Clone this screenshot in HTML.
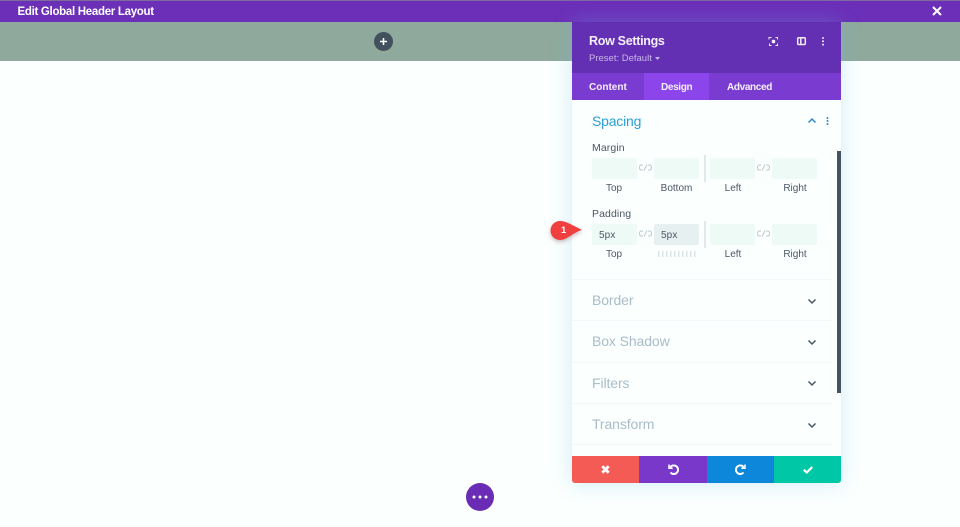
<!DOCTYPE html>
<html><head><meta charset="utf-8"><style>
html,body{margin:0;padding:0}
body{width:960px;height:527px;position:relative;overflow:hidden;background:#fbfffe;font-family:"Liberation Sans",sans-serif}
.a{position:absolute}
.t{position:absolute;white-space:nowrap;line-height:1}
.inp{position:absolute;height:21px;background:#eefaf5;border-radius:2px;width:45px}
.lb{position:absolute;font-size:10px;color:#4c5866;width:60px;text-align:center;line-height:1}
.sec{position:absolute;left:592px;font-size:14px;color:#a9bcc8;line-height:1;letter-spacing:-.1px}
.ln{position:absolute;left:572px;width:260px;height:1px;background:#f2f8f8}
svg{position:absolute;overflow:visible}
</style></head><body>
<div class="a" style="left:0;top:0;width:960px;height:22px;background:#6b2fb8"></div>
<div class="a" style="left:0;top:0;width:960px;height:1px;background:#7d6a9c"></div>
<div class="t" style="left:17.5px;top:6.5px;font-size:11.5px;font-weight:bold;color:#fff;letter-spacing:-.3px">Edit Global Header Layout</div>
<svg style="left:932px;top:6px" width="10" height="10"><path d="M1 1L9 9M9 1L1 9" stroke="#fff" stroke-width="2"/></svg>
<div class="a" style="left:0;top:22px;width:960px;height:39px;background:#8fa99d"></div>
<div class="a" style="left:374px;top:32px;width:19px;height:19px;border-radius:50%;background:#43505e"></div>
<svg style="left:380px;top:38px" width="7" height="7"><path d="M3.5 0V7M0 3.5H7" stroke="#fff" stroke-width="1.5"/></svg>

<div class="a" style="left:572px;top:22px;width:269px;height:461px;background:#fbfffe;box-shadow:0 0 20px rgba(110,190,235,.3);border-radius:3px"></div>
<div class="a" style="left:572px;top:22px;width:269px;height:51px;background:#6330b3"></div>
<div class="t" style="left:589px;top:35px;font-size:12.5px;font-weight:bold;color:#f4effb;letter-spacing:-.3px">Row Settings</div>
<div class="t" style="left:589px;top:53.5px;font-size:9.5px;color:#c9b6e8">Preset: Default</div>
<svg style="left:655px;top:57px" width="5" height="3"><path d="M0 0H5L2.5 3Z" fill="#c9b6e8"/></svg>
<svg style="left:769px;top:36.500px" width="9" height="9" fill="none" stroke="#f0eaf9" stroke-width="1"><path d="M0 2.5V.5H2.5M6.5 .5H8.500V2.500M8.500 6.500V8.500H6.500M2.500 8.500H.5V6.500"/><rect x="2.800" y="2.800" width="3.400" height="3.400" rx="1" fill="#f0eaf9" stroke="none"/></svg>
<svg style="left:796.500px;top:37px" width="9" height="8" fill="none" stroke="#f0eaf9" stroke-width="1.500"><rect x=".7" y=".7" width="7.600" height="6.800" rx="1"/><path d="M3.800 0V8"/></svg>
<svg style="left:821px;top:37px" width="4" height="9" fill="#f0eaf9"><circle cx="2" cy="1" r="1"/><circle cx="2" cy="4.300" r="1"/><circle cx="2" cy="7.600" r="1"/></svg>

<div class="a" style="left:572px;top:73px;width:269px;height:27px;background:#7a3bd0"></div>
<div class="a" style="left:644px;top:73px;width:65px;height:27px;background:#8b45ea"></div>
<div class="t" style="left:589px;top:83px;font-size:10px;font-weight:bold;color:#f5f0fc">Content</div>
<div class="t" style="left:661px;top:83px;font-size:10px;font-weight:bold;color:#f5f0fc;letter-spacing:-.35px">Design</div>
<div class="t" style="left:727px;top:83px;font-size:10px;font-weight:bold;color:#f5f0fc;letter-spacing:-.35px">Advanced</div>

<div class="t" style="left:592px;top:114px;font-size:14px;color:#2c9fd6;letter-spacing:-.2px">Spacing</div>
<svg style="left:807.500px;top:118px" width="8" height="5" fill="none" stroke="#2b87da" stroke-width="1.500"><path d="M.5 4.500L4 1L7.500 4.500"/></svg>
<svg style="left:825.500px;top:116.500px" width="3" height="8" fill="#2b87da"><circle cx="1.500" cy="1" r="1"/><circle cx="1.500" cy="4" r="1"/><circle cx="1.500" cy="7" r="1"/></svg>

<div class="t" style="left:592px;top:143px;font-size:10.500px;color:#4c5866;letter-spacing:.1px">Margin</div>
<div class="inp" style="left:592px;top:158px"></div>
<div class="inp" style="left:654px;top:158px"></div>
<div class="inp" style="left:710px;top:158px"></div>
<div class="inp" style="left:772px;top:158px"></div>
<div class="a" style="left:704px;top:155px;width:2px;height:27px;background:#dfe8ea"></div>
<svg style="left:639px;top:164px" width="13" height="7" fill="none" stroke="#bcc8cf" stroke-width="1"><path d="M4 1H2.500Q.5 1 .5 3.500T2.500 6H4M9 1H10.500Q12.500 1 12.500 3.500T10.500 6H9M5 6.500L8 .5"/></svg>
<svg style="left:757px;top:164px" width="13" height="7" fill="none" stroke="#bcc8cf" stroke-width="1"><path d="M4 1H2.500Q.5 1 .5 3.500T2.500 6H4M9 1H10.500Q12.500 1 12.500 3.500T10.500 6H9M5 6.500L8 .5"/></svg>
<div class="lb" style="left:584px;top:184px">Top</div>
<div class="lb" style="left:646.500px;top:184px">Bottom</div>
<div class="lb" style="left:703px;top:184px">Left</div>
<div class="lb" style="left:765px;top:184px">Right</div>

<div class="t" style="left:592px;top:209px;font-size:10.500px;color:#4c5866;letter-spacing:.1px">Padding</div>
<div class="inp" style="left:592px;top:224px"></div>
<div class="inp" style="left:654px;top:224px;background:#e6f0f1"></div>
<div class="inp" style="left:710px;top:224px"></div>
<div class="inp" style="left:772px;top:224px"></div>
<div class="a" style="left:704px;top:221px;width:2px;height:27px;background:#dfe8ea"></div>
<svg style="left:639px;top:230px" width="13" height="7" fill="none" stroke="#bcc8cf" stroke-width="1"><path d="M4 1H2.500Q.5 1 .5 3.500T2.500 6H4M9 1H10.500Q12.500 1 12.500 3.500T10.500 6H9M5 6.500L8 .5"/></svg>
<svg style="left:757px;top:230px" width="13" height="7" fill="none" stroke="#bcc8cf" stroke-width="1"><path d="M4 1H2.500Q.5 1 .5 3.500T2.500 6H4M9 1H10.500Q12.500 1 12.500 3.500T10.500 6H9M5 6.500L8 .5"/></svg>
<div class="t" style="left:599px;top:231px;font-size:10px;color:#4c5866;letter-spacing:.1px">5px</div>
<div class="t" style="left:661px;top:231px;font-size:10px;color:#4c5866;letter-spacing:.1px">5px</div>
<div class="lb" style="left:584px;top:250px">Top</div>
<div class="lb" style="left:703px;top:250px">Left</div>
<div class="lb" style="left:765px;top:250px">Right</div>
<div class="a" style="left:658px;top:251px;width:38px;height:6px;background:repeating-linear-gradient(90deg,#dbe4e6 0 1.500px,transparent 1.500px 4px)"></div>

<svg style="left:550px;top:221px;filter:drop-shadow(0 2px 2px rgba(90,30,30,.3))" width="33" height="20"><path d="M10 0C16 0 22 4 32 9C22 12 17 19 10 19A9.500 9.500 0 0 1 10 0Z" fill="#ef3f3f"/></svg>
<div class="t" style="left:561px;top:226px;font-size:9.500px;font-weight:bold;color:#fff">1</div>

<div class="ln" style="top:279px"></div>
<div class="ln" style="top:320px"></div>
<div class="ln" style="top:362px"></div>
<div class="ln" style="top:403px"></div>
<div class="ln" style="top:444px"></div>
<div class="sec" style="top:293px">Border</div>
<div class="sec" style="top:334px">Box Shadow</div>
<div class="sec" style="top:376px">Filters</div>
<div class="sec" style="top:417px">Transform</div>
<svg style="left:807.500px;top:299px" width="8" height="5" fill="none" stroke="#4a5663" stroke-width="1.500"><path d="M.5 .5L4 4L7.500 .5"/></svg>
<svg style="left:807.500px;top:340px" width="8" height="5" fill="none" stroke="#4a5663" stroke-width="1.500"><path d="M.5 .5L4 4L7.500 .5"/></svg>
<svg style="left:807.500px;top:381px" width="8" height="5" fill="none" stroke="#4a5663" stroke-width="1.500"><path d="M.5 .5L4 4L7.500 .5"/></svg>
<svg style="left:807.500px;top:422.500px" width="8" height="5" fill="none" stroke="#4a5663" stroke-width="1.500"><path d="M.5 .5L4 4L7.500 .5"/></svg>

<div class="a" style="left:837px;top:151px;width:4px;height:242px;background:#47545f"></div>

<div class="a" style="left:572px;top:456px;width:67.500px;height:27px;background:#f45b55;border-radius:0 0 0 3px"></div>
<div class="a" style="left:639px;top:456px;width:68px;height:27px;background:#7a38cb"></div>
<div class="a" style="left:707px;top:456px;width:67px;height:27px;background:#0c87d9"></div>
<div class="a" style="left:774px;top:456px;width:67px;height:27px;background:#00c7a6;border-radius:0 0 3px 0"></div>
<svg style="left:601px;top:465px" width="9" height="9"><path d="M1.300 1.300L7.700 7.700M7.700 1.300L1.300 7.700" stroke="#fff" stroke-width="2.800"/></svg>
<svg style="left:668px;top:464px" width="11" height="11" fill="none" stroke="#fff" stroke-width="1.900"><path d="M2.200 3.300A4.300 4.300 0 1 1 2.500 8.500"/><path d="M1 .5V4.200H4.700" stroke-width="1.500"/></svg>
<svg style="left:735px;top:464px" width="11" height="11" fill="none" stroke="#fff" stroke-width="1.900"><path d="M8.800 3.300A4.300 4.300 0 1 0 8.500 8.500"/><path d="M10 .5V4.200H6.300" stroke-width="1.500"/></svg>
<svg style="left:802.500px;top:466px" width="10" height="8" fill="none" stroke="#fff" stroke-width="2.200"><path d="M.8 3.800L3.800 6.500L9.200 1"/></svg>

<div class="a" style="left:466px;top:483px;width:28px;height:28px;border-radius:50%;background:#6a2cb5"></div>
<svg style="left:472px;top:495px" width="16" height="4" fill="#fff"><circle cx="2" cy="2" r="1.500"/><circle cx="8" cy="2" r="1.500"/><circle cx="14" cy="2" r="1.500"/></svg>
</body></html>
